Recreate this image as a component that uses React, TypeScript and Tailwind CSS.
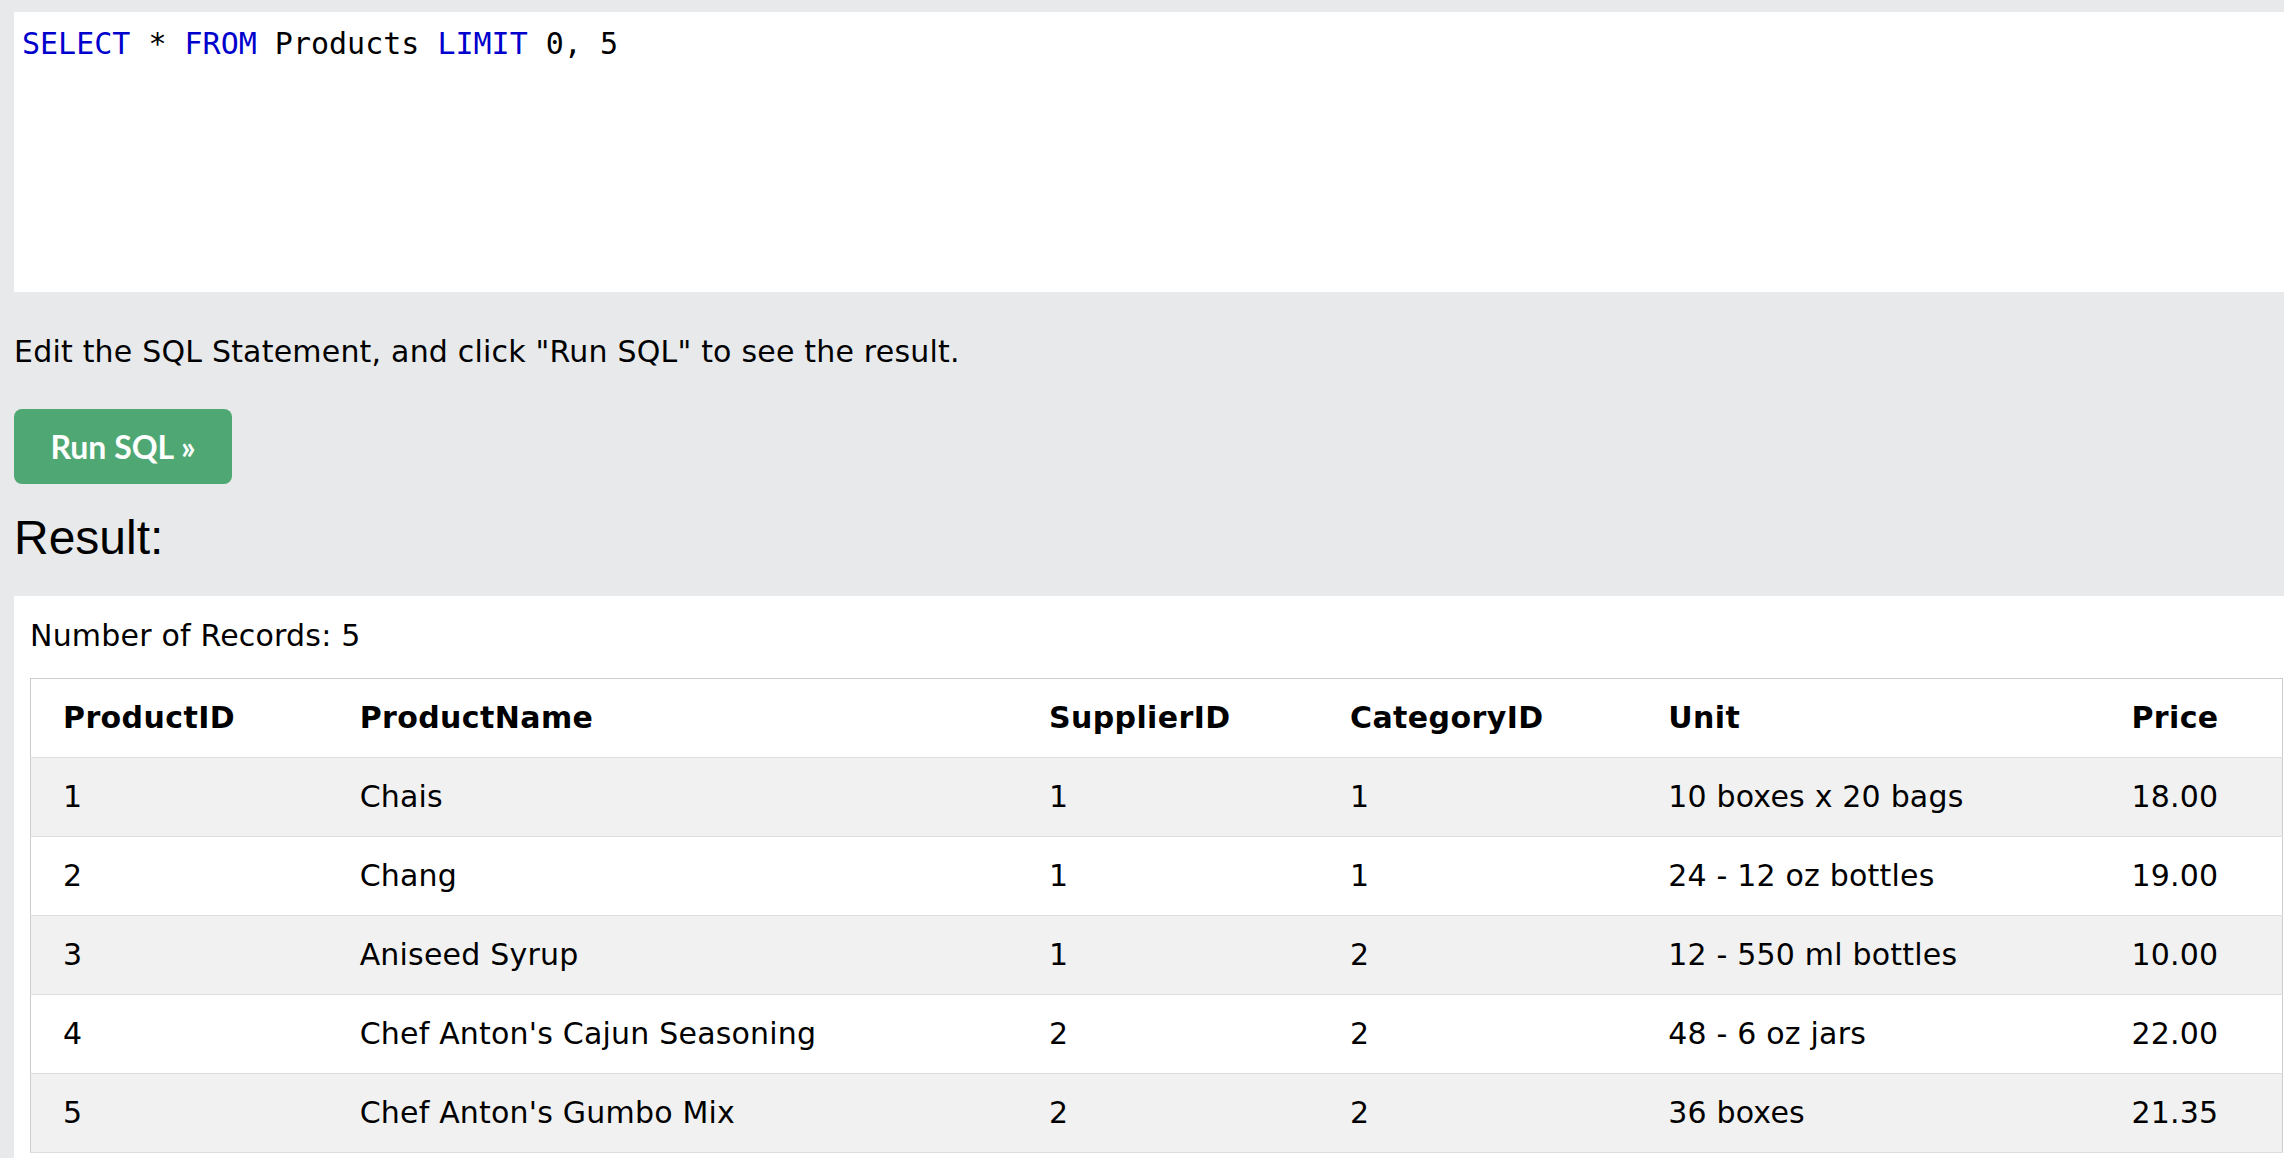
const columns = [
  { name: "ProductID", width: "w-[313px]" },
  { name: "ProductName", width: "w-[689px]" },
  { name: "SupplierID", width: "w-[301px]" },
  { name: "CategoryID", width: "w-[318px]" },
  { name: "Unit", width: "w-[463px]" },
  { name: "Price", width: "w-[167px]" },
];

const rows = [
  ["1", "Chais", "1", "1", "10 boxes x 20 bags", "18.00"],
  ["2", "Chang", "1", "1", "24 - 12 oz bottles", "19.00"],
  ["3", "Aniseed Syrup", "1", "2", "12 - 550 ml bottles", "10.00"],
  ["4", "Chef Anton's Cajun Seasoning", "2", "2", "48 - 6 oz jars", "22.00"],
  ["5", "Chef Anton's Gumbo Mix", "2", "2", "36 boxes", "21.35"],
];

function Editor() {
  return (
    <div className="h-[280px] bg-white pl-[8px] pt-[9px] font-['DejaVu_Sans_Mono',monospace] text-[30px] leading-[45px] tracking-normal text-black whitespace-pre">
      <span className="text-[#0000cd]">SELECT</span> * <span className="text-[#0000cd]">FROM</span> Products{" "}
      <span className="text-[#0000cd]">LIMIT</span> 0, 5
    </div>
  );
}

function ResultTable() {
  return (
    <table className="mt-[20px] w-[2253px] table-fixed border-collapse border border-[#cccccc] text-left">
      <thead>
        <tr className="border-b border-[#dddddd] bg-white">
          {columns.map((col, i) => (
            <th
              key={col.name}
              className={`${col.width} py-4 pr-4 font-bold leading-[46px] tracking-[0.4px] ${i === 0 ? "pl-8" : "pl-4"}`}
            >
              {col.name}
            </th>
          ))}
        </tr>
      </thead>
      <tbody>
        {rows.map((row, r) => (
          <tr
            key={row[0]}
            className={`border-b border-[#dddddd] ${r % 2 === 0 ? "bg-[#f1f1f1]" : "bg-white"}`}
          >
            {row.map((cell, i) => (
              <td key={i} className={`py-4 pr-4 leading-[46px] ${i === 0 ? "pl-8" : "pl-4"}`}>
                {cell}
              </td>
            ))}
          </tr>
        ))}
      </tbody>
    </table>
  );
}

export default function App() {
  return (
    <div className="h-screen overflow-hidden bg-[#e7e9eb] pl-[14px] pt-3 font-['DejaVu_Sans',Verdana,sans-serif] text-[30px] leading-[45px] tracking-[0.2px] text-black">
      <Editor />
      <p className="mt-[37px]">Edit the SQL Statement, and click "Run SQL" to see the result.</p>
      <button className="mt-[35px] flex h-[75px] w-[218px] items-center justify-center rounded-lg bg-[#4fa873] font-['Lato',sans-serif] text-[32px] font-bold tracking-normal text-white">
        Run SQL »
      </button>
      <h2 className="mt-[30px] font-['Liberation_Sans',Arial,sans-serif] text-[48px] leading-[48px] tracking-normal">
        Result:
      </h2>
      <div className="mt-[34px] h-[600px] bg-white pl-4 pt-[17px]">
        <div>Number of Records: 5</div>
        <ResultTable />
      </div>
    </div>
  );
}
